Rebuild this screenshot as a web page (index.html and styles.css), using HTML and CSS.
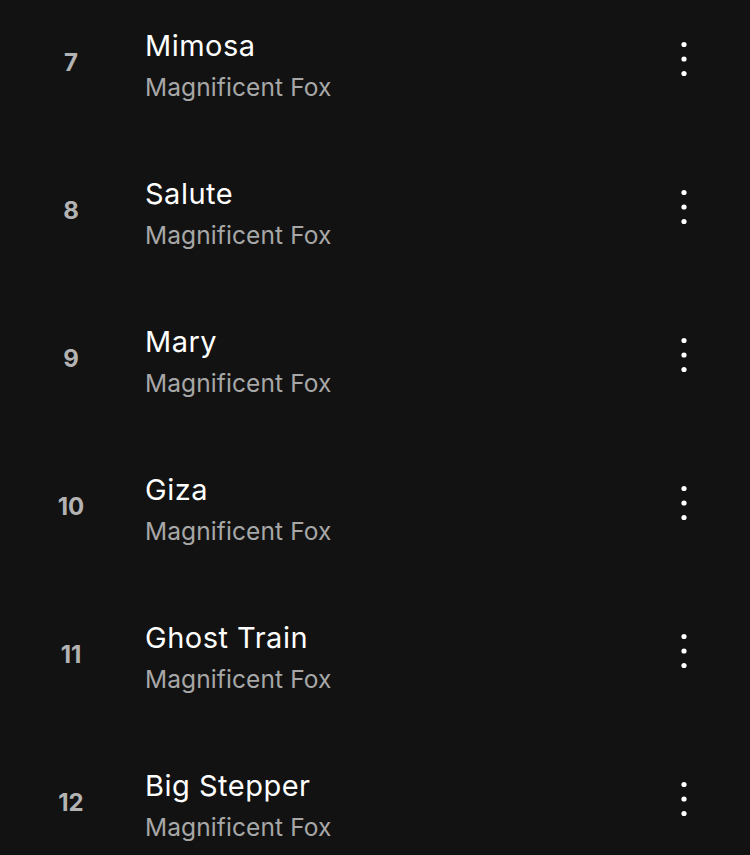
FILE: index.html
```html
<!DOCTYPE html>
<html lang="en">

<head>
    <meta charset="UTF-8">
    <meta name="viewport" content="width=device-width, initial-scale=1.0">
    <title>Tracks</title>
    <link rel="stylesheet" href="styles.css">
</head>

<body>
    <div class="track-list">
        <div class="track">
            <div class="track-num">7</div>
            <div class="track-info">
                <div class="track-title">Mimosa</div>
                <div class="track-artist">Magnificent Fox</div>
            </div>
            <div class="track-more">
                <svg width="8" height="36" viewBox="0 0 8 36"><circle cx="4" cy="3.5" r="2.6"/><circle cx="4" cy="18" r="2.6"/><circle cx="4" cy="32.5" r="2.6"/></svg>
            </div>
        </div>
        <div class="track">
            <div class="track-num">8</div>
            <div class="track-info">
                <div class="track-title">Salute</div>
                <div class="track-artist">Magnificent Fox</div>
            </div>
            <div class="track-more">
                <svg width="8" height="36" viewBox="0 0 8 36"><circle cx="4" cy="3.5" r="2.6"/><circle cx="4" cy="18" r="2.6"/><circle cx="4" cy="32.5" r="2.6"/></svg>
            </div>
        </div>
        <div class="track">
            <div class="track-num">9</div>
            <div class="track-info">
                <div class="track-title">Mary</div>
                <div class="track-artist">Magnificent Fox</div>
            </div>
            <div class="track-more">
                <svg width="8" height="36" viewBox="0 0 8 36"><circle cx="4" cy="3.5" r="2.6"/><circle cx="4" cy="18" r="2.6"/><circle cx="4" cy="32.5" r="2.6"/></svg>
            </div>
        </div>
        <div class="track">
            <div class="track-num">10</div>
            <div class="track-info">
                <div class="track-title">Giza</div>
                <div class="track-artist">Magnificent Fox</div>
            </div>
            <div class="track-more">
                <svg width="8" height="36" viewBox="0 0 8 36"><circle cx="4" cy="3.5" r="2.6"/><circle cx="4" cy="18" r="2.6"/><circle cx="4" cy="32.5" r="2.6"/></svg>
            </div>
        </div>
        <div class="track">
            <div class="track-num">11</div>
            <div class="track-info">
                <div class="track-title">Ghost Train</div>
                <div class="track-artist">Magnificent Fox</div>
            </div>
            <div class="track-more">
                <svg width="8" height="36" viewBox="0 0 8 36"><circle cx="4" cy="3.5" r="2.6"/><circle cx="4" cy="18" r="2.6"/><circle cx="4" cy="32.5" r="2.6"/></svg>
            </div>
        </div>
        <div class="track">
            <div class="track-num">12</div>
            <div class="track-info">
                <div class="track-title">Big Stepper</div>
                <div class="track-artist">Magnificent Fox</div>
            </div>
            <div class="track-more">
                <svg width="8" height="36" viewBox="0 0 8 36"><circle cx="4" cy="3.5" r="2.6"/><circle cx="4" cy="18" r="2.6"/><circle cx="4" cy="32.5" r="2.6"/></svg>
            </div>
        </div>
    </div>
</body>

</html>
```

FILE: styles.css
```css
html,
body {
    margin: 0;
    background-color: #121212;
}

body {
    font-family: Inter, "Open Sans", Arial, sans-serif;
    color: #fff;
    height: 855px;
    overflow: hidden;
}

.track {
    display: grid;
    grid-template-columns: 62px 1fr 40px;
    column-gap: 43px;
    align-items: start;
    height: 148px;
    box-sizing: border-box;
    padding: 29px 46px 0 40px;
}

.track-num {
    margin-top: 20px;
    text-align: center;
    font-size: 24px;
    line-height: 28px;
    font-weight: 700;
    color: #b3b3b3;
}

.track-title {
    font-size: 29px;
    line-height: 34px;
    letter-spacing: 0.5px;
    color: #fff;
}

.track-artist {
    margin-top: 10px;
    font-size: 24.5px;
    line-height: 28px;
    letter-spacing: 0.1px;
    color: #a7a7a7;
}

.track-more {
    margin-top: 12px;
    display: flex;
    justify-content: center;
}

.track-more svg {
    fill: #fff;
}
```
